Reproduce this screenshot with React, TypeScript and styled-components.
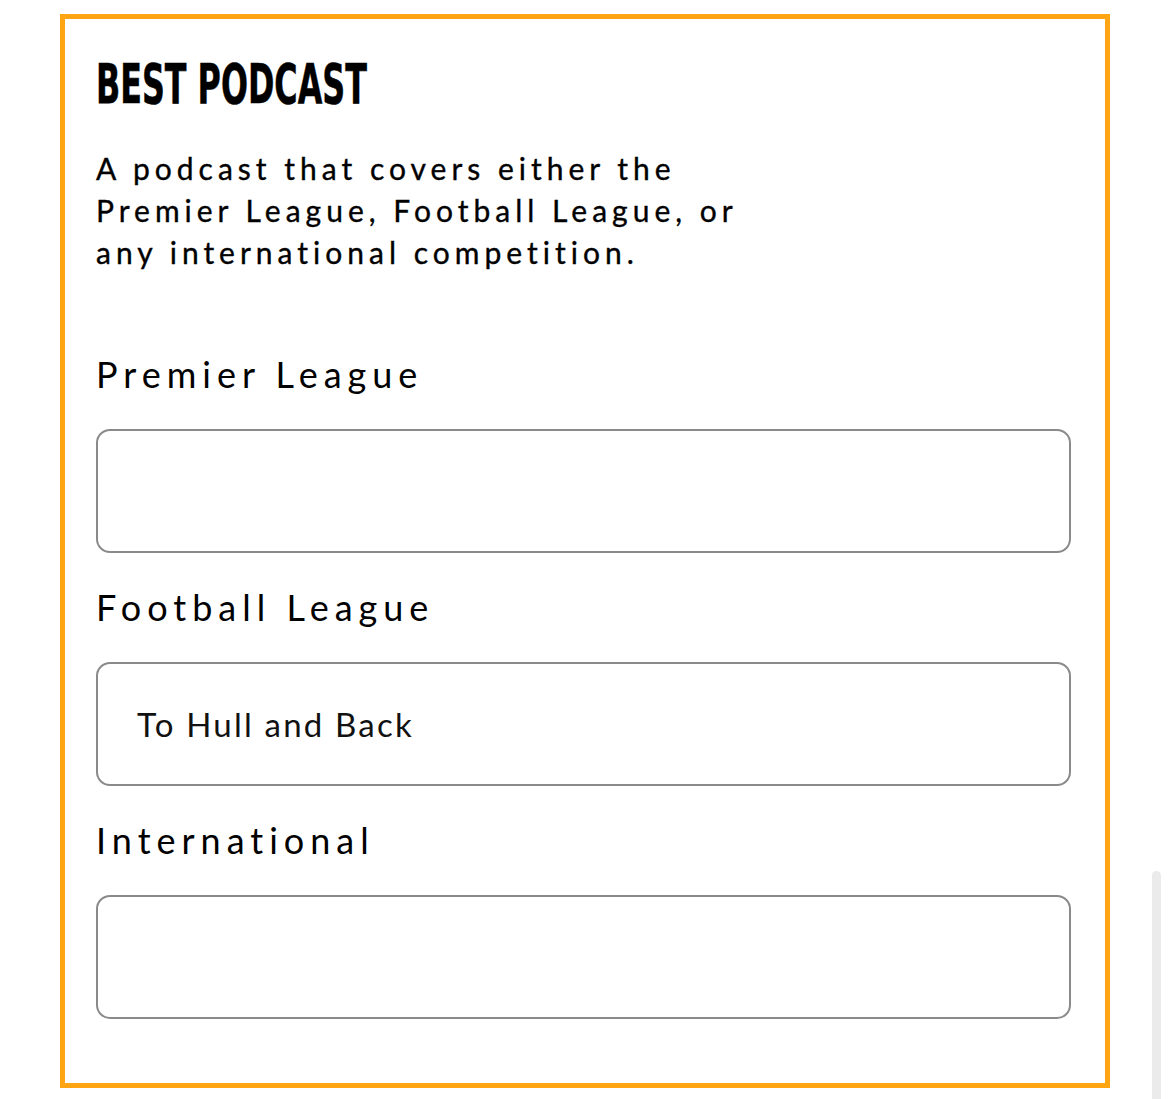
import React from "react";
import styled, { createGlobalStyle } from "styled-components";

const Global = createGlobalStyle`
  html, body { margin: 0; padding: 0; background: #ffffff; }
  body { width: 1169px; height: 1099px; overflow: hidden; position: relative; }
`;

const Page = styled.div`
  padding: 14px 0 0 60px;
`;

const Card = styled.section`
  width: 1050px;
  height: 1074px;
  box-sizing: border-box;
  border: 5px solid #ffa514;
  padding: 38px 34px 0 31px;
  display: flex;
  flex-direction: column;
`;

const TitleWrap = styled.div`
  height: 52px;
  display: flex;
  align-items: flex-start;
`;

const Title = styled.h2`
  margin: 0;
  font-family: "DejaVu Sans", sans-serif;
  font-weight: 700;
  font-size: 55px;
  line-height: 55px;
  letter-spacing: 0;
  color: #000;
  display: inline-block;
  transform: scaleX(0.578);
  transform-origin: left top;
  white-space: nowrap;
  -webkit-text-stroke: 0.6px #000;
`;

const Description = styled.p`
  margin: 38px 0 0 0;
  font-family: "Lato", sans-serif;
  font-size: 30px;
  line-height: 42px;
  letter-spacing: 5px;
  color: #000;
  -webkit-text-stroke: 0.35px #000;
`;

const Field = styled.div`
  display: flex;
  flex-direction: column;
`;

const Label = styled.label<{ $first?: boolean }>`
  display: block;
  margin-top: ${(p) => (p.$first ? "81px" : "34px")};
  font-family: "Lato", sans-serif;
  font-size: 36px;
  line-height: 40px;
  letter-spacing: 6px;
  color: #000;
`;

const Input = styled.div`
  margin-top: 35px;
  height: 124px;
  box-sizing: border-box;
  border: 2px solid #8a8a8a;
  border-radius: 14px;
  padding: 0 0 0 39px;
  display: flex;
  align-items: center;
  font-family: "Lato", sans-serif;
  font-size: 33px;
  letter-spacing: 2.2px;
  color: #111;
`;

const Scrollbar = styled.div`
  position: absolute;
  left: 1152px;
  top: 871px;
  width: 9px;
  height: 240px;
  border-radius: 5px 5px 0 0;
  background: #ebebeb;
`;

const fields = [
  { label: "Premier League", value: "" },
  { label: "Football League", value: "To Hull and Back" },
  { label: "International", value: "" },
];

export default function App() {
  return (
    <>
      <Global />
      <Page>
        <Card>
          <TitleWrap>
            <Title>BEST PODCAST</Title>
          </TitleWrap>
          <Description>
            A podcast that covers either the
            <br />
            Premier League, Football League, or
            <br />
            any international competition.
          </Description>
          {fields.map((f, i) => (
            <Field key={f.label}>
              <Label $first={i === 0}>{f.label}</Label>
              <Input>{f.value}</Input>
            </Field>
          ))}
        </Card>
      </Page>
      <Scrollbar />
    </>
  );
}
